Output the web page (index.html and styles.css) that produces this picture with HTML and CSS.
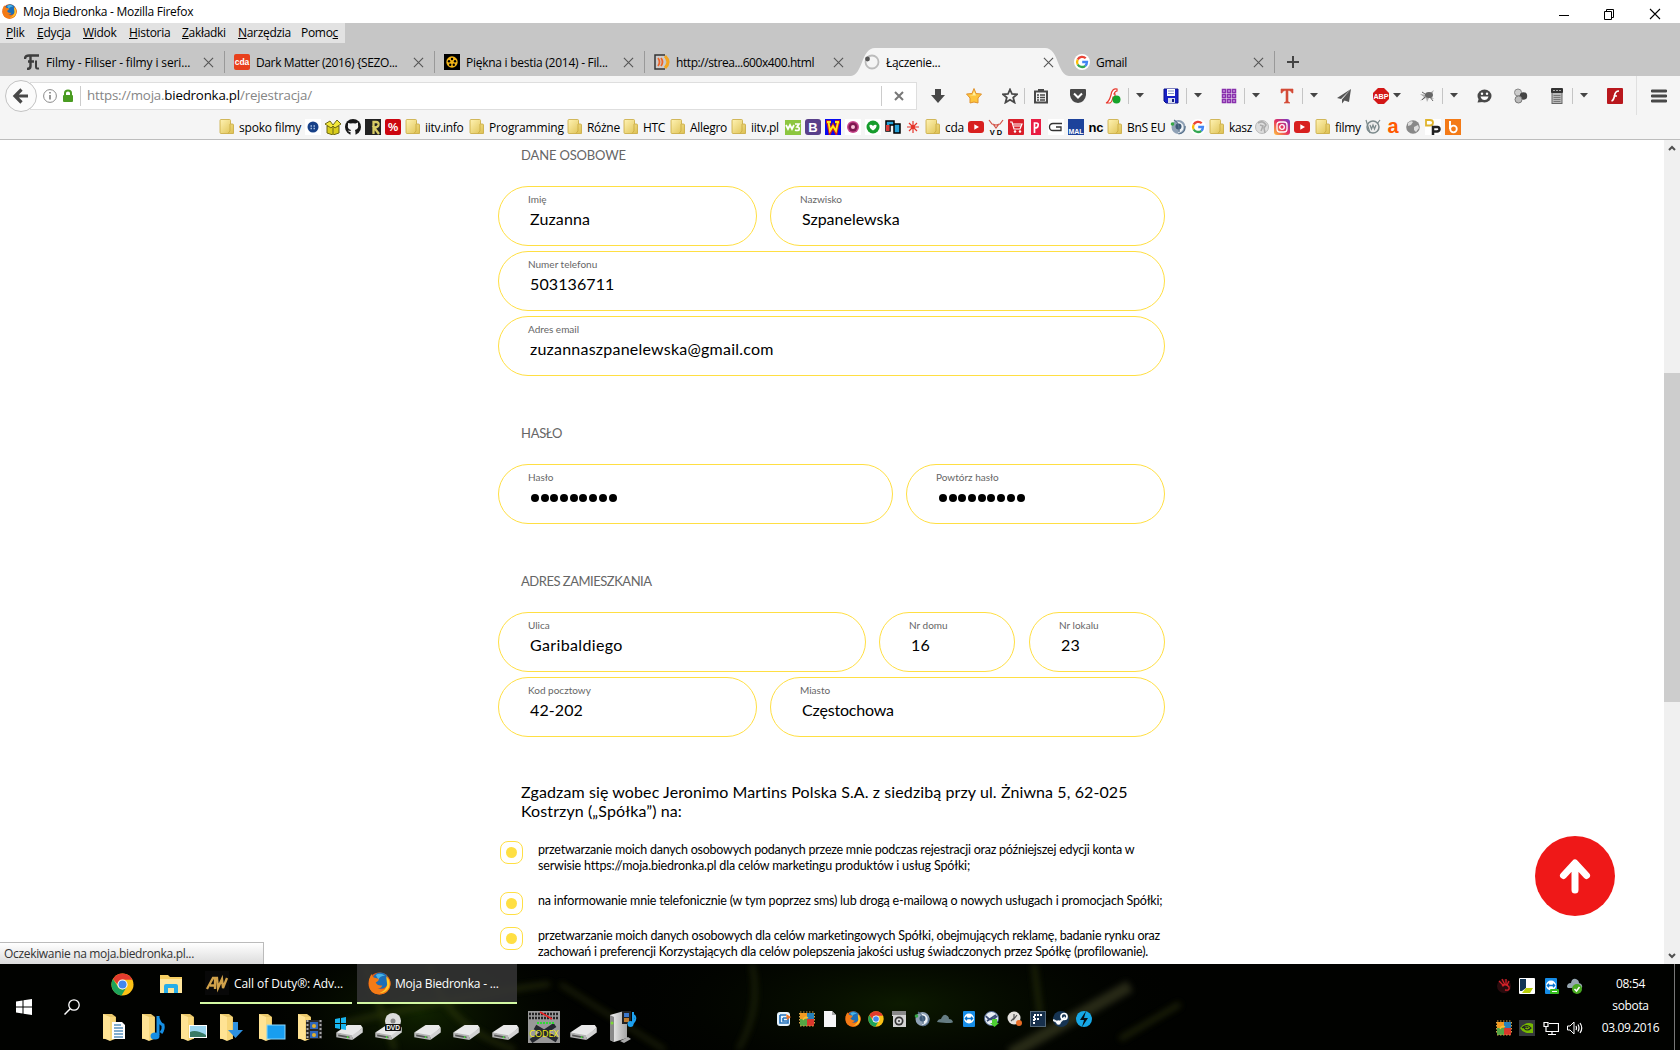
FILE: index.html
```html
<!DOCTYPE html>
<html lang="pl">
<head>
<meta charset="utf-8">
<title>Moja Biedronka</title>
<link rel="stylesheet" href="styles.css">
</head>
<body>
<svg class="defs" aria-hidden="true">
  <defs>
    <linearGradient id="gFolder" x1="0" y1="0" x2="1" y2="1"><stop offset="0" stop-color="#fff3b4"/><stop offset="1" stop-color="#ddc050"/></linearGradient>
    <linearGradient id="gInsta" x1="0" y1="1" x2="1" y2="0"><stop offset="0" stop-color="#ffc43d"/><stop offset=".5" stop-color="#e6315f"/><stop offset="1" stop-color="#6a3bd0"/></linearGradient>
    <linearGradient id="gGrey" x1="0" y1="0" x2="1" y2="0"><stop offset="0" stop-color="#f4f4f4"/><stop offset="1" stop-color="#a5a5a5"/></linearGradient>
    <symbol id="folder" viewBox="0 0 16 16"><path d="M1 1.5Q1 .5 2 .5H10.500Q11.500 .5 11.500 1.500V5H13.500Q14.500 5 14.500 6V14.500H2Q1 14.500 1 13.500Z" fill="url(#gFolder)" stroke="#c8a83c" stroke-width=".8"/><path d="M11 5V12L9 14.500" fill="none" stroke="#c8a83c" stroke-width=".8"/></symbol>
    <symbol id="close" viewBox="0 0 12 12"><path d="M1 1L11 11M11 1L1 11" stroke="#555" stroke-width="1.200" fill="none"/></symbol>
    <symbol id="caret" viewBox="0 0 8 5"><path d="M0 0H8L4 4.500Z" fill="#444"/></symbol>
    <symbol id="google" viewBox="0 0 16 16"><circle cx="8" cy="8" r="8" fill="#fff"/><g fill="none" stroke-width="2.300"><path d="M11.700 4.300A5 5 0 0 0 3.700 5.600" stroke="#ea4335"/><path d="M3.700 5.600A5 5 0 0 0 3.700 10.500" stroke="#fbbc05"/><path d="M3.700 10.500A5 5 0 0 0 11.300 11.800" stroke="#34a853"/><path d="M11.300 11.800A5 5 0 0 0 13 8H8.200" stroke="#4285f4"/></g></symbol>
    <symbol id="chrome" viewBox="0 0 24 24"><circle cx="12" cy="12" r="11.500" fill="#fbc116"/><path d="M2 6.300A11.500 11.500 0 0 1 22.400 7H12A5 5 0 0 0 7 12Z" fill="#e33b2e"/><path d="M2 6.300A11.500 11.500 0 0 0 11 23.500L16 15A5 5 0 0 1 7.500 14.500Z" fill="#1da25a"/><circle cx="12" cy="12" r="5.300" fill="#fff"/><circle cx="12" cy="12" r="4.200" fill="#4387f0"/></symbol>
    <symbol id="firefox" viewBox="0 0 24 24"><circle cx="12" cy="12" r="11.500" fill="#e55b13"/><circle cx="13" cy="9" r="8.500" fill="#1c6eb8"/><path d="M8 3Q13 0 18 4Q12 4 11 8Z" fill="#47b5e8"/><path d="M1 8Q2 4 4 2Q4 5 7 6L11 7Q12 9 8 11Q10 15 15 14Q14 17 10 17Q16 20 20 15Q22 11 19 4Q24 8 23.500 13Q22 23 12 23.500Q2 23 1 14Z" fill="#f47b16"/><path d="M19 5Q24 9 22 16Q19 22 12 22Q19 19 20 13Z" fill="#ffc92d"/></symbol>
    <symbol id="youtube" viewBox="0 0 16 16"><rect y="2" width="16" height="12" rx="3" fill="#d8201f"/><path d="M6.300 5.300L11 8L6.300 10.700Z" fill="#fff"/></symbol>
    <symbol id="teamspeak" viewBox="0 0 16 16"><circle cx="8.500" cy="8" r="7" fill="#8fa1b5"/><path d="M6 2.500Q14 3 13.500 9Q13 13 8 14Q11 9 6 2.500Z" fill="#eef2f6"/><circle cx="8.500" cy="7.500" r="3" fill="#3c5876"/><path d="M4 1Q10 4 9 13M8.500 15Q15.500 14 15 7" stroke="#56708a" stroke-width="1.200" fill="none"/><circle cx="2.500" cy="5" r="1.800" fill="#35a844"/></symbol>
    <symbol id="bigfolder" viewBox="0 0 28 28"><path d="M1 1H10L14 4V26L1 26Z" fill="#e9c76b"/><path d="M1 1L8 4V28L1 25Z" fill="#ffe394"/><path d="M8 4H13V26L8 28Z" fill="#f7d679"/></symbol>
    <symbol id="drive" viewBox="0 0 30 18"><path d="M1 9L13 1H27L29 4L18 14Z" fill="#e9e9e9"/><path d="M1 9L18 12V17L1 14Z" fill="#b5b5b5"/><path d="M18 12L29 4V9L18 17Z" fill="#d2d2d2"/><path d="M3 11L15 13.200V15L3 13Z" fill="#555"/><circle cx="13" cy="14" r="1" fill="#4be33d"/></symbol>
    <symbol id="puzzle" viewBox="0 0 16 16"><path d="M1 2H8V8H1Z" fill="#f39b22"/><path d="M8 2H15V8H8Z" fill="#2781ba"/><path d="M1 8H8V15H1Z" fill="#54a545"/><path d="M8 8H15V15H8Z" fill="#d9372c"/><path d="M1 1H15M1 15H15M.5 2V14M15.500 2V14" stroke="#d4a347" stroke-dasharray="1.500 1.500"/><path d="M4 9Q6 5 9 7" stroke="#f2c536" stroke-width="1.500" fill="none"/></symbol>
    <symbol id="viewer" viewBox="0 0 16 16"><rect x="2" width="12" height="16" rx="1" fill="#168de8"/><circle cx="8" cy="7.500" r="5" fill="#fff"/><path d="M4.500 7.500H11.500M6 5.800L4.300 7.500L6 9.200M10 5.800L11.700 7.500L10 9.200" stroke="#0874cf" stroke-width="1.300" fill="none"/></symbol>
  </defs>
</svg>

<header class="chrome">
  <div class="titlebar">
    <svg class="i15"><use href="#firefox"/></svg>
    <span class="window-title">Moja Biedronka - Mozilla Firefox</span>
    <svg class="window-buttons" viewBox="0 0 120 24"><path d="M8 15.500H18" stroke="#000"/><path d="M53.500 11.500H60.500V19.500H53.500ZM55.500 11V9.500H62.500V17.500H61" fill="none" stroke="#000"/><path d="M99 9L109 19M109 9L99 19" stroke="#000" stroke-width="1.100"/></svg>
  </div>
  <nav class="menubar">
    <span class="m1"><u>P</u>lik</span><span class="m2"><u>E</u>dycja</span><span class="m3"><u>W</u>idok</span><span class="m4"><u>H</u>istoria</span><span class="m5"><u>Z</u>akładki</span><span class="m6"><u>N</u>arzędzia</span><span class="m7">Pomo<u>c</u></span>
  </nav>
  <div class="tabs">
    <div class="tab"><svg class="i16" viewBox="0 0 16 16"><path d="M1 5Q1 1.500 5 1.500H15M6.500 2V12Q6.500 15 3 15M4 7.500H10" fill="none" stroke="#3d3d3d" stroke-width="2.400"/><path d="M12 6.500V13Q12 15 15 14.500" fill="none" stroke="#3d3d3d" stroke-width="2"/></svg><span class="t1">Filmy - Filiser - filmy i seri...</span><svg class="x"><use href="#close"/></svg></div>
    <div class="tab"><svg class="i16" viewBox="0 0 16 16"><rect width="16" height="16" rx="2" fill="#e8401c"/><text x="8" y="11" font-size="8.500" class="b mid" fill="#fff">cda</text></svg><span class="t2">Dark Matter (2016) {SEZO...</span><svg class="x"><use href="#close"/></svg></div>
    <div class="tab"><svg class="i16" viewBox="0 0 16 16"><rect width="16" height="16"/><circle cx="8" cy="8" r="5.700" fill="#f3b518"/><g fill="#000"><circle cx="8" cy="5" r="1.200"/><circle cx="5" cy="7.300" r="1.200"/><circle cx="11" cy="7.300" r="1.200"/><circle cx="6.200" cy="10.800" r="1.200"/><circle cx="9.800" cy="10.800" r="1.200"/></g></svg><span class="t3">Piękna i bestia (2014) - Fil...</span><svg class="x"><use href="#close"/></svg></div>
    <div class="tab last"><svg class="i16" viewBox="0 0 16 16"><path d="M11 1H1V15H11" fill="#ccc" stroke="#333" stroke-width="1.500"/><path d="M4 4Q7 8 4 12M7 4Q10 8 7 12" stroke="#ee6528" stroke-width="1.800" fill="none"/><path d="M11 2Q17 8 11 14" stroke="#f3a51e" stroke-width="3" fill="none"/></svg><span class="t4">http://strea...600x400.html</span><svg class="x"><use href="#close"/></svg></div>
    <div class="tab active"><svg class="tabshape" viewBox="0 0 218 29" preserveAspectRatio="none"><path d="M0 29C12 28 10 1 24 1H194C208 1 206 28 218 29Z" fill="#f5f5f5"/></svg><svg class="i16" viewBox="0 0 16 16"><circle cx="8" cy="8" r="6.500" fill="none" stroke="#bcbcbc" stroke-width="1.800"/><circle cx="3.500" cy="5" r="2.400" fill="#555"/></svg><span class="t5">Łączenie...</span><svg class="x"><use href="#close"/></svg></div>
    <div class="tab"><svg class="i16"><use href="#google"/></svg><span class="t6">Gmail</span><svg class="x"><use href="#close"/></svg></div>
    <svg class="plus" viewBox="0 0 12 12"><path d="M6 0V12M0 6H12" stroke="#444" stroke-width="2"/></svg>
  </div>
  <div class="toolbar">
    <div class="address">
      <svg class="back" viewBox="0 0 34 34"><circle cx="17" cy="17" r="15.500" fill="#fbfbfb" stroke="#c3c3c3"/><path d="M24 17H12M17.500 10.500L11 17L17.500 23.500" fill="none" stroke="#484848" stroke-width="3.200"/></svg>
      <svg class="info" viewBox="0 0 14 14"><circle cx="7" cy="7" r="6.400" fill="none" stroke="#8b8b8b"/><path d="M7 6V10.500M7 3V4.500" stroke="#777" stroke-width="1.500"/></svg>
      <svg class="lock" viewBox="0 0 12 14"><path d="M3 7V4Q3 1.500 6 1.500Q9 1.500 9 4V7" fill="none" stroke="#4a9c22" stroke-width="2"/><rect x="1" y="6" width="10" height="7" rx="1" fill="#4a9c22"/></svg>
      <span class="url">https://moja.<b>biedronka.pl</b>/rejestracja/</span>
      <svg class="stop" viewBox="0 0 10 10"><path d="M1 1L9 9M9 1L1 9" stroke="#777" stroke-width="2"/></svg>
    </div>
    <span class="tb"><svg viewBox="0 0 16 16"><path d="M5 1H11V7H15L8 15L1 7H5Z" fill="#484848"/></svg></span>
    <span class="tb"><svg viewBox="0 0 16 16"><path d="M8 .5L10 5.500L15.500 6L12 10V15L8 14L4 15V10L.5 6L6 5.500Z" fill="#fdc53d" stroke="#e0922e"/><path d="M8 3L6.500 7L3 7.500H10Z" fill="#fff0a0"/></svg></span>
    <span class="tb"><svg viewBox="0 0 16 16"><path d="M8 1.500L10 6L15 6.300L11.200 9.500L12.500 14.500L8 11.800L3.500 14.500L4.800 9.500L1 6.300L6 6Z" fill="none" stroke="#484848" stroke-width="1.800"/></svg></span>
    <i class="sep pull"></i>
    <span class="tb w32"><svg viewBox="0 0 16 16"><path d="M2 3.500H14V14.500H2Z" fill="none" stroke="#484848" stroke-width="2"/><path d="M5 4V1H11V4Z" fill="#484848"/><path d="M4 7H6M7 7H12M4 9.500H6M7 9.500H12M4 12H6M7 12H12" stroke="#484848" stroke-width="1.300"/></svg></span>
    <span class="tb w42"><svg viewBox="0 0 16 16"><path d="M0 2Q0 1 1 1H15Q16 1 16 2V7Q15 14 8 15Q1 14 0 7Z" fill="#484848"/><path d="M4 5.500L8 9.500L12 5.500" fill="none" stroke="#fff" stroke-width="2"/></svg></span>
    <span class="split"><svg viewBox="0 0 16 16"><path d="M12 1Q7 0 6 7Q4 14 1 15H5Q7 14 8 9H10V6H9Q10 3 12 3Z" fill="#fff" stroke="#e8392e" stroke-width="1.200"/><circle cx="11.500" cy="11.500" r="4" fill="#16a32a"/></svg><i class="sep"></i><svg class="caret"><use href="#caret"/></svg></span>
    <span class="split"><svg viewBox="0 0 16 16"><path d="M1 1H15V15H3L1 13Z" fill="#1720c5" stroke="#090e89"/><path d="M4 1H12V8H4Z" fill="#fff"/><path d="M5 3H11M5 5.500H11" stroke="#8597c4"/><path d="M5 10H12V15H5Z" fill="#d7dcef"/><path d="M9 11H11V14H9Z" fill="#111a7d"/></svg><i class="sep"></i><svg class="caret"><use href="#caret"/></svg></span>
    <span class="split"><svg viewBox="0 0 16 16"><g fill="#d9aeea" stroke="#8931ad" stroke-width="1.500"><path d="M1.500 1.500H4.500V4.500H1.500ZM6.500 1.500H9.500V4.500H6.500ZM11.500 1.500H14.500V4.500H11.500ZM1.500 6.500H4.500V9.500H1.500ZM6.500 6.500H9.500V9.500H6.500ZM11.500 6.500H14.500V9.500H11.500ZM1.500 11.500H4.500V14.500H1.500ZM6.500 11.500H9.500V14.500H6.500ZM11.500 11.500H14.500V14.500H11.500Z"/></g></svg><i class="sep"></i><svg class="caret"><use href="#caret"/></svg></span>
    <span class="split"><svg viewBox="0 0 16 16"><path d="M2 1H14V5H13Q12.500 2.500 10 2.500H9V13.500L11 15H5L7 13.500V2.500H6Q3.500 2.500 3 5H2Z" fill="#d34a37" stroke="#d34a37" stroke-width=".6"/></svg><i class="sep"></i><svg class="caret"><use href="#caret"/></svg></span>
    <span class="tb w28"><svg viewBox="0 0 16 16"><path d="M15 1L1 10L5 11ZM15 1L6 11.500V15.500L8.500 12.500L13 14Z" fill="#555"/></svg></span>
    <span class="abp"><svg viewBox="0 0 16 16"><path d="M5 0H11L16 5V11L11 16H5L0 11V5Z" fill="#d31717"/><text x="8" y="10.800" font-size="7.200" class="b mid" fill="#fff">ABP</text></svg><svg class="caret"><use href="#caret"/></svg></span>
    <span class="split"><svg viewBox="0 0 16 16"><path d="M1 6L8 7L15 2L12 8L15 11L10 10L8 14L7 10L1 13L5 9Z" fill="#aaa"/><ellipse cx="10" cy="7" rx="4" ry="3" fill="#666"/><path d="M3 4L9 8M11 9L14 13M6 9L3 12" stroke="#666"/></svg><i class="sep"></i><svg class="caret"><use href="#caret"/></svg></span>
    <span class="tb w28"><svg viewBox="0 0 16 16"><ellipse cx="8.500" cy="8" rx="7" ry="6.500" fill="#484848"/><path d="M1.500 14.500L3 10L7 14Z" fill="#484848"/><path d="M4.500 8.500H12.500Q11.500 12 8.500 12Q5.500 12 4.500 8.500Z" fill="#fff"/><circle cx="6" cy="5.700" r="1.200" fill="#fff"/><circle cx="11" cy="5.700" r="1.200" fill="#fff"/></svg></span>
    <span class="tb w44"><svg viewBox="0 0 16 16"><circle cx="6" cy="4.500" r="3.500" fill="#ccc" stroke="#888"/><circle cx="11.500" cy="8" r="3.700" fill="#444"/><circle cx="6.500" cy="11.500" r="3.500" fill="#bbb" stroke="#777"/></svg></span>
    <span class="split"><svg viewBox="0 0 16 16"><rect x="3" y="4" width="10" height="11.500" fill="#b9b9b9" stroke="#666"/><rect x="2" y="0" width="12" height="5" rx="1" fill="#333"/><path d="M4.500 7.500H11.500M4.500 9.500H11.500M4.500 11.500H11.500M4.500 13.500H11.500" stroke="#777"/><path d="M4 2.500H12" stroke="#aaa" stroke-dasharray="2 1"/></svg><i class="sep"></i><svg class="caret"><use href="#caret"/></svg></span>
    <span class="tb w30"><svg viewBox="0 0 16 16"><rect width="16" height="16" rx="1" fill="#b9171d"/><path d="M12 3Q8 3 7.500 8Q6.500 12.500 4.500 13M6.500 8H10" fill="none" stroke="#fff" stroke-width="1.700"/></svg></span>
    <span class="hamb"><svg viewBox="0 0 16 16"><path d="M1 3H15M1 8H15M1 13H15" stroke="#484848" stroke-width="2.800" stroke-linecap="round"/></svg></span>
  </div>
  <div class="bookmarks">
    <span class="f bk1"><svg><use href="#folder"/></svg>spoko filmy</span>
    <span class="c"><svg viewBox="0 0 16 16"><rect width="16" height="16" fill="#fff"/><circle cx="8" cy="8" r="5.500" fill="#174087"/><path d="M5.500 7H10.500M5.500 9.500H10.500" stroke="#a3bce0" stroke-width="1.300" stroke-dasharray="1.500 1.500"/></svg></span>
    <span class="c"><svg viewBox="0 0 16 16"><path d="M2 7H14V14L8 16L2 14Z" fill="#d9cd1b" stroke="#6d6716"/><path d="M0 5L5 2L8 6L12 1L16 5L10 9L8 7L6 9Z" fill="#f2e73b" stroke="#6d6716"/><path d="M8 8V15" stroke="#6d6716"/></svg></span>
    <span class="c"><svg viewBox="0 0 16 16"><circle cx="8" cy="8" r="8" fill="#181818"/><path d="M3 4L5.500 4.500Q8 3.800 10.500 4.500L13 3.500V6Q14 10 10 11Q10.600 12 10.500 16H5.500V13Q3.500 13 3 11.500L5.500 12L6 11Q2 10 3 6Z" fill="#f5f5f5"/></svg></span>
    <span class="c"><svg viewBox="0 0 16 16"><rect width="16" height="16" fill="#222"/><path d="M8.500 15V3H11Q14 3 13.500 6Q13 8.500 9 8.500L14 15" fill="none" stroke="#d9cc65" stroke-width="2.300"/></svg></span>
    <span class="c"><svg viewBox="0 0 16 16"><rect width="16" height="16" rx="2" fill="#cc0610"/><text x="8" y="12" font-size="11.500" class="b mid" fill="#fff">%</text></svg></span>
    <span class="f bk2"><svg><use href="#folder"/></svg>iitv.info</span>
    <span class="f bk3"><svg><use href="#folder"/></svg>Programming</span>
    <span class="f bk4"><svg><use href="#folder"/></svg>Różne</span>
    <span class="f bk5"><svg><use href="#folder"/></svg>HTC</span>
    <span class="f bk6"><svg><use href="#folder"/></svg>Allegro</span>
    <span class="f bk7"><svg><use href="#folder"/></svg>iitv.pl</span>
    <span class="c"><svg viewBox="0 0 16 16"><rect y="1" width="16" height="15" fill="#8cc63f"/><path d="M1 6L3 10L5 6L7 10L9 6M10 5H14L12 8Q15 8 14 11Q12 12 10 11" fill="none" stroke="#fff" stroke-width="1.700"/></svg></span>
    <span class="c"><svg viewBox="0 0 16 16"><rect width="16" height="16" rx="3" fill="#59408a"/><text x="8" y="12.500" font-size="13" class="b mid" fill="#fff">B</text></svg></span>
    <span class="c"><svg viewBox="0 0 16 16"><rect width="16" height="16" fill="#0809f0"/><path d="M1 3H6M10 3H15M3 3L5 13L8 7L11 13L13 3" fill="none" stroke="#d42019" stroke-width="3.500"/><path d="M2 3H6M10 3H14M3.500 3L5 12L8 7L11 12L13 3" fill="none" stroke="#ffec19" stroke-width="1.800"/></svg></span>
    <span class="c"><svg viewBox="0 0 16 16"><rect width="16" height="16" fill="#fff"/><circle cx="8" cy="8" r="6" fill="#c9468c"/><circle cx="8" cy="8" r="4.500" fill="#7e1950"/><circle cx="8" cy="8" r="2" fill="#fac5d9"/></svg></span>
    <span class="c"><svg viewBox="0 0 16 16"><rect width="16" height="16" fill="#fff"/><circle cx="8" cy="8" r="6.500" fill="#169c2c"/><path d="M4.500 6Q6.500 5 8 7Q9.500 5 11.500 6Q12 9 8 11.500Q4 9 4.500 6Z" fill="#fff"/></svg></span>
    <span class="c"><svg viewBox="0 0 16 16"><path d="M1 12V2H9V5H15V14H9V6H5V12Z" fill="#28a3d9" stroke="#000" stroke-width="1.500"/><path d="M1 6H4.500V12H1Z" fill="#da3937"/></svg></span>
    <span class="c"><svg viewBox="0 0 16 16"><path d="M8 2V14M2 8H14M4 4L12 12M12 4L4 12" stroke="#e6342a" stroke-width="1.200"/><circle cx="8" cy="8" r="2" fill="#e6342a"/></svg></span>
    <span class="f bk8"><svg><use href="#folder"/></svg>cda</span>
    <span class="c"><svg><use href="#youtube"/></svg></span>
    <span class="c"><svg viewBox="0 0 16 16"><path d="M1 1L4 5L8 6L12 5L15 1M5 5L8 9L11 5" fill="none" stroke="#d35347" stroke-width="1.200"/><text x="8" y="15.500" font-size="7.500" class="b mid">V D</text></svg></span>
    <span class="c"><svg viewBox="0 0 16 16"><rect width="16" height="16" rx="1" fill="#d91f2a"/><path d="M2 3H4L6 10H12L14 5H5M6 7H13" fill="none" stroke="#fff" stroke-width="1.200"/><circle cx="7" cy="12.500" r="1.200" fill="#fff"/><circle cx="12" cy="12.500" r="1.200" fill="#fff"/></svg></span>
    <span class="c"><svg viewBox="0 0 16 16"><rect x="3" width="10" height="16" fill="#e91d43"/><path d="M6.500 14V4H8Q11 4 10 7Q9.500 9 7 9" fill="none" stroke="#fff" stroke-width="1.700"/></svg></span>
    <span class="c"><svg viewBox="0 0 16 16"><rect width="16" height="16" fill="#fff"/><path d="M14 4.500H5Q1.500 4.500 1.500 8Q1.500 11.500 5 11.500H13V8H8" fill="none" stroke="#333" stroke-width="1.300"/></svg></span>
    <span class="c"><svg viewBox="0 0 16 16"><rect width="16" height="16" fill="#1c429b"/><text x="8" y="15" font-size="7" class="b mid" fill="#fff">MAL</text></svg></span>
    <span class="c"><svg viewBox="0 0 16 16"><text x="8" y="12.500" font-size="13" class="b mid">nc</text></svg></span>
    <span class="f bk9"><svg><use href="#folder"/></svg>BnS EU</span>
    <span class="c"><svg><use href="#teamspeak"/></svg></span>
    <span class="c"><svg><use href="#google"/></svg></span>
    <span class="f bk10"><svg><use href="#folder"/></svg>kasz</span>
    <span class="c"><svg viewBox="0 0 16 16"><circle cx="8" cy="8" r="6.500" fill="#ddd" stroke="#bbb"/><path d="M4 4Q9 1 12 6L10 9L11 14M6 6L9 7L7 12" fill="none" stroke="#aaa" stroke-width="1.500"/></svg></span>
    <span class="c"><svg viewBox="0 0 16 16"><rect width="16" height="16" rx="3" fill="url(#gInsta)"/><rect x="3" y="3" width="10" height="10" rx="3" fill="none" stroke="#fff" stroke-width="1.300"/><circle cx="8" cy="8" r="2.300" fill="none" stroke="#fff" stroke-width="1.300"/></svg></span>
    <span class="c"><svg><use href="#youtube"/></svg></span>
    <span class="f bk11"><svg><use href="#folder"/></svg>filmy</span>
    <span class="c"><svg viewBox="0 0 16 16"><circle cx="8" cy="8" r="6" fill="#eee" stroke="#7b898b" stroke-width="1.500"/><path d="M1 1L5 14M15 1L12 5M5 6L6.500 10L8 6L9.500 10L11 6" fill="none" stroke="#7b898b" stroke-width="1.200"/></svg></span>
    <span class="c"><svg viewBox="0 0 16 16"><text x="8" y="14" font-size="20" class="b mid" fill="#ff5a00">a</text></svg></span>
    <span class="c"><svg viewBox="0 0 16 16"><circle cx="8" cy="8" r="6.800" fill="#888"/><path d="M3 4Q6 1 8 3L6 6L3 7ZM9 8L13 6L14 9L11 13L9 11Z" fill="#ddd"/></svg></span>
    <span class="c"><svg viewBox="0 0 16 16"><rect width="16" height="16" fill="#fff"/><path d="M1 1H5Q8 1 8 3.500Q8 6.500 5 6.500H1Z" fill="#fff" stroke="#dfb42d" stroke-width="1.800"/><path d="M8 16V8H12.500Q14.500 8 14.500 10.500Q14.500 13 9 12.500" fill="none" stroke="#222" stroke-width="2.500"/></svg></span>
    <span class="c"><svg viewBox="0 0 16 16"><rect width="16" height="16" fill="#f47a16"/><path d="M5 2V10" stroke="#fff" stroke-width="2"/><circle cx="8.500" cy="10" r="3.300" fill="none" stroke="#fff" stroke-width="1.800"/></svg></span>
  </div>
</header>

<main class="page">
  <form class="form">
    <h2 class="h-a">DANE OSOBOWE</h2>
    <div class="row r-name"><label class="field"><small>Imię</small><span class="v v1">Zuzanna</span></label><label class="field"><small>Nazwisko</small><span class="v v2">Szpanelewska</span></label></div>
    <div class="row"><label class="field"><small>Numer telefonu</small><span class="v v3">503136711</span></label></div>
    <div class="row"><label class="field"><small>Adres email</small><span class="v v4">zuzannaszpanelewska@gmail.com</span></label></div>
    <h2>HASŁO</h2>
    <div class="row r-pass"><label class="field"><small>Hasło</small><span class="dots"><i></i><i></i><i></i><i></i><i></i><i></i><i></i><i></i><i></i></span></label><label class="field"><small>Powtórz hasło</small><span class="dots"><i></i><i></i><i></i><i></i><i></i><i></i><i></i><i></i><i></i></span></label></div>
    <h2 class="h-c">ADRES ZAMIESZKANIA</h2>
    <div class="row r-street"><label class="field"><small>Ulica</small><span class="v v5">Garibaldiego</span></label><label class="field"><small>Nr domu</small><span class="v v3">16</span></label><label class="field"><small>Nr lokalu</small><span class="v v3">23</span></label></div>
    <div class="row r-name"><label class="field"><small>Kod pocztowy</small><span class="v v3">42-202</span></label><label class="field"><small>Miasto</small><span class="v v6">Częstochowa</span></label></div>
    <p class="intro"><span class="in1">Zgadzam się wobec Jeronimo Martins Polska S.A. z siedzibą przy ul. Żniwna 5, 62-025</span><br><span class="in2">Kostrzyn („Spółka”) na:</span></p>
    <div class="consent c1"><i class="check"></i><p><span class="l1">przetwarzanie moich danych osobowych podanych przeze mnie podczas rejestracji oraz późniejszej edycji konta w</span><br><span class="l2">serwisie https://moja.biedronka.pl dla celów marketingu produktów i usług Spółki;</span></p></div>
    <div class="consent c2"><i class="check"></i><p><span class="l3">na informowanie mnie telefonicznie (w tym poprzez sms) lub drogą e-mailową o nowych usługach i promocjach Spółki;</span></p></div>
    <div class="consent c3"><i class="check"></i><p><span class="l4">przetwarzanie moich danych osobowych dla celów marketingowych Spółki, obejmujących reklamę, badanie rynku oraz</span><br><span class="l5">zachowań i preferencji Korzystających dla celów polepszenia jakości usług świadczonych przez Spółkę (profilowanie).</span></p></div>
  </form>
  <div class="scrollbar"><svg viewBox="0 0 16 16"><path d="M5 10L8 7L11 10" fill="none" stroke="#505050" stroke-width="2"/></svg><i class="thumb"></i><svg viewBox="0 0 16 16"><path d="M5 6L8 9L11 6" fill="none" stroke="#505050" stroke-width="2"/></svg></div>
  <svg class="totop" viewBox="0 0 80 80"><circle cx="40" cy="40" r="40" fill="#ef1818"/><path d="M40 54V28M28.500 39.500L40 27L51.500 39.500" fill="none" stroke="#fff" stroke-width="7" stroke-linecap="round" stroke-linejoin="round"/></svg>
  <div class="status">Oczekiwanie na moja.biedronka.pl...</div>
</main>

<footer class="taskbar">
  <svg class="wall" viewBox="0 0 1680 86" preserveAspectRatio="none">
    <defs><filter id="soft"><feGaussianBlur stdDeviation="3"/></filter><radialGradient id="gGreen"><stop offset="0" stop-color="#142a00"/><stop offset="1" stop-color="#020400" stop-opacity="0"/></radialGradient></defs>
    <ellipse cx="900" cy="40" rx="280" ry="90" fill="url(#gGreen)" opacity=".6"/><ellipse cx="420" cy="50" rx="170" ry="90" fill="url(#gGreen)" opacity=".8"/>
    <g fill="none" stroke="#4c5516" filter="url(#soft)" opacity=".4"><path d="M752 0Q762 45 738 86M560 20L665 86" stroke-width="4"/><path d="M1034 0L1040 50M1120 75L1180 40" stroke-width="5"/><path d="M1010 90L1130 22" stroke="#62633a" stroke-width="12"/><path d="M365 0L395 86M430 0Q440 60 515 86M340 60Q470 30 550 20" stroke-width="5"/></g>
  </svg>
  <svg class="start" viewBox="0 0 16 16"><path d="M0 2.500L6.500 1.500V7.500H0ZM7.500 1.300L16 0V7.500H7.500ZM0 8.500H6.500V14.500L0 13.500ZM7.500 8.500H16V16L7.500 14.700Z" fill="#fff"/></svg>
  <svg class="search" viewBox="0 0 16 16"><circle cx="10" cy="6" r="5.200" fill="none" stroke="#fff" stroke-width="1.300"/><path d="M6.200 9.800L.5 15.500" stroke="#fff" stroke-width="1.500"/></svg>
  <div class="tasks">
    <div class="running">
      <svg class="i22"><use href="#chrome"/></svg>
      <svg class="expl" viewBox="0 0 22 20"><path d="M0 1H8L10 3H22V19H0Z" fill="#f6ce62"/><path d="M0 5H22V19H0Z" fill="#ffe69c"/><path d="M4 19V12Q4 10 6 10H16Q18 10 18 12V19H14V14H8V19Z" fill="#26ade8"/></svg>
      <div class="task aw"><svg viewBox="0 0 24 24"><rect width="24" height="24" fill="#080808"/><path d="M2 18L8 7H10V18M5 14.500H9M10 7H12L13 17L17 8L18 17L22 7" fill="none" stroke="#d0a14a" stroke-width="2.300"/></svg><span>Call of Duty®: Adv...</span></div>
      <div class="task ff"><svg class="i22"><use href="#firefox"/></svg><span>Moja Biedronka - ...</span></div>
    </div>
    <div class="quick">
      <svg viewBox="0 0 32 32"><use href="#bigfolder" x="3" y="2" width="28" height="28"/><path d="M13 11H23L26 14V28H13Z" fill="#fff"/><path d="M15 14H22M15 17H24M15 20H24M15 23H24M15 26H24" stroke="#5b93bd" stroke-width="1.300"/></svg>
      <svg viewBox="0 0 32 32"><use href="#bigfolder" x="3" y="2" width="28" height="28"/><path d="M20 5V24M20 7Q22 13 25 14Q26 18 23 22" fill="none" stroke="#168fe4" stroke-width="3"/><ellipse cx="17" cy="25" rx="4.500" ry="3.500" fill="#168fe4"/></svg>
      <svg viewBox="0 0 32 32"><use href="#bigfolder" x="3" y="2" width="28" height="28"/><rect x="12" y="14" width="18" height="13" fill="#fff"/><rect x="13" y="15" width="16" height="11" fill="#9bd6ef"/><path d="M13 21Q19 18 29 24V26H13Z" fill="#397a65"/></svg>
      <svg viewBox="0 0 32 32"><use href="#bigfolder" x="3" y="2" width="28" height="28"/><path d="M17 11H22V19H27L19.500 27L12 19H17Z" fill="#2e91df"/></svg>
      <svg viewBox="0 0 32 32"><use href="#bigfolder" x="3" y="2" width="28" height="28"/><rect x="12" y="14" width="18" height="14" fill="#189ef0" stroke="#8bd7fc"/></svg>
      <svg viewBox="0 0 32 32"><use href="#bigfolder" x="3" y="2" width="28" height="28"/><rect x="12" y="9" width="16" height="19" fill="#272727"/><path d="M13.500 9V28M26.500 9V28" stroke="#aaa" stroke-width="2" stroke-dasharray="2 2"/><rect x="16" y="11" width="8" height="7" fill="#3066ba"/><rect x="16" y="20" width="8" height="7" fill="#3066ba"/><circle cx="20" cy="15" r="2" fill="#e2b02d"/><circle cx="20" cy="24" r="2" fill="#e2b02d"/></svg>
      <svg viewBox="0 0 32 32"><use href="#drive" x="2" y="13" width="29" height="17"/><path d="M2 8L7 7V12H2ZM8 7L13 6V12H8ZM2 13H7V18L2 17ZM8 13H13V19L8 18Z" fill="#18b6f0"/></svg>
      <svg viewBox="0 0 32 32"><use href="#drive" x="2" y="13" width="29" height="17"/><circle cx="21" cy="10" r="8" fill="#ddd"/><circle cx="21" cy="10" r="2.500" fill="#888"/><rect x="13" y="13" width="16" height="7" rx="1" fill="#111"/><text x="21" y="19" font-size="6.500" class="b mid" fill="#fff">DVD</text></svg>
      <svg viewBox="0 0 32 32"><use href="#drive" x="2" y="13" width="29" height="17"/></svg>
      <svg viewBox="0 0 32 32"><use href="#drive" x="2" y="13" width="29" height="17"/></svg>
      <svg viewBox="0 0 32 32"><use href="#drive" x="2" y="13" width="29" height="17"/></svg>
      <svg class="codex" viewBox="0 0 32 32"><rect width="32" height="32" fill="#999"/><path d="M3 30L27 14M7 16L29 29" stroke="#25282f" stroke-width="5"/><path d="M1 3H31M1 7H30" stroke="#222" stroke-width="2.500" stroke-dasharray="2 1"/><path d="M12 1L24 8" stroke="#e22" stroke-width="1.500"/><path d="M9 12H27" stroke="#2fdc35" stroke-width="2" stroke-dasharray="2 1"/><text x="16" y="26" font-size="9" class="mid" fill="#f4ed14">CODEX</text></svg>
      <svg viewBox="0 0 32 32"><use href="#drive" x="2" y="13" width="29" height="17"/></svg>
      <svg class="media" viewBox="0 0 32 36"><path d="M4 6L18 2L21 5V29L8 33L4 31Z" fill="url(#gGrey)"/><path d="M4 6L8 8V33L4 31Z" fill="#888"/><path d="M14 32L22 28L25 30L18 34Z" fill="#aaa"/><circle cx="6" cy="14" r="1.500" fill="#7bd834"/><rect x="16" y="2" width="9" height="13" fill="#222"/><rect x="18" y="4" width="5" height="4" fill="#3c78cc"/><rect x="18" y="9" width="5" height="4" fill="#bd7b30"/><path d="M27 3V14Q31 10 28 6" fill="none" stroke="#1ca0ee" stroke-width="2"/><circle cx="24.500" cy="15" r="3" fill="#1ca0ee"/></svg>
    </div>
  </div>
  <div class="launch">
    <svg viewBox="0 0 16 16"><rect x="1" y="1" width="13" height="14" rx="3" fill="#e7f4fc"/><path d="M4 4H10M4 4V12H12V7M7 7H11M7 7V10H11" fill="none" stroke="#2773bb" stroke-width="1.700"/><path d="M10 3L15 6L11 9Z" fill="#ee7325"/></svg>
    <svg><use href="#puzzle"/></svg>
    <svg viewBox="0 0 16 16"><path d="M2 0H10L14 4V16H2Z" fill="#f6f6f6"/><path d="M10 0V4H14Z" fill="#aaa"/></svg>
    <svg><use href="#firefox"/></svg><svg><use href="#chrome"/></svg>
    <svg viewBox="0 0 16 16"><path d="M1 0H15V16H2V5H1Z" fill="#d3d3d3"/><path d="M1 0H15V4H1Z" fill="#888"/><circle cx="8" cy="10" r="4.500" fill="#333"/><circle cx="8" cy="10" r="2.800" fill="#ddd"/><circle cx="8" cy="10" r="1" fill="#333"/></svg>
    <svg><use href="#teamspeak"/></svg>
    <svg viewBox="0 0 16 16"><path d="M0 11Q1 8 4 8Q6 3 9 4Q12 5 12 8Q15 8 16 11Q15 13 0 11Z" fill="#657c82"/></svg>
    <svg><use href="#viewer"/></svg>
    <svg viewBox="0 0 16 16"><circle cx="7.500" cy="7.500" r="7" fill="#e8eef5" stroke="#455d88"/><path d="M2 5Q7 12 13 5M3 10L12 4" fill="none" stroke="#394c75" stroke-width="1.700"/><path d="M8 8H13V12H15L10.500 16L6 12H8Z" fill="#4dcf32"/></svg>
    <svg viewBox="0 0 16 16"><circle cx="7" cy="7" r="6.500" fill="#e4e1dd"/><path d="M7 3V8L10 4M4 10L7 7" fill="none" stroke="#555" stroke-width="1.200"/><circle cx="12" cy="12" r="3" fill="#e76b24"/></svg>
    <svg viewBox="0 0 16 16"><rect x=".5" y=".5" width="15" height="15" fill="#17304c" stroke="#53687a"/><path d="M4 13V4H12M4 8H10" fill="none" stroke="#fff" stroke-width="2" stroke-dasharray="2 1"/></svg>
    <svg viewBox="0 0 16 16"><circle cx="8" cy="8" r="8" fill="#163453"/><path d="M0 9L6 12L12 6" fill="none" stroke="#e8edf1" stroke-width="2"/><circle cx="11" cy="5.500" r="3" fill="none" stroke="#fff" stroke-width="1.700"/><circle cx="5.500" cy="11.500" r="2.300" fill="#fff"/></svg>
    <svg viewBox="0 0 16 16"><circle cx="8" cy="8" r="8" fill="#16a8e7"/><path d="M10 0L4 9H8L6 16L12 7H8Z" fill="#071017"/></svg>
  </div>
  <div class="tray">
    <svg viewBox="0 0 16 16"><circle cx="8" cy="8" r="7" fill="#280b0d"/><path d="M3 3L8 8M6 1L9 7M10 1L10 6M13 3L11 7M6 8Q10 5 13 9Q14 13 9 12" fill="none" stroke="#d42128" stroke-width="1.300"/></svg>
    <svg viewBox="0 0 16 16"><rect width="16" height="16" rx="1" fill="#fff"/><path d="M1 1H7V10L3 13H1Z" fill="#103454"/><path d="M7 10H14L11 15H3Z" fill="#b9ce08"/></svg>
    <svg viewBox="0 0 16 16"><use href="#viewer"/><rect x="7" y="11" width="9" height="5" rx="1" fill="#35bb1d"/><path d="M9 13.500H14" stroke="#fff"/></svg>
    <svg viewBox="0 0 16 16"><path d="M0 9Q0 5 4 5Q5 0 9 1Q12 2 12 5Q16 6 15 10H1Z" fill="#95a5af"/><circle cx="10" cy="11" r="5" fill="#48a91f"/><path d="M7.500 11L9.500 13L12.500 9" fill="none" stroke="#fff" stroke-width="1.500"/></svg>
    <svg><use href="#puzzle"/></svg>
    <svg viewBox="0 0 16 16"><rect width="16" height="16" fill="#34383c"/><path d="M1 8Q7 1 14 4V13H8Q3 12 1 8Z" fill="#76b900"/><path d="M3 8Q8 3 12 8Q8 12 5 8Q8 6 9 8" fill="none" stroke="#222" stroke-width="1.200"/></svg>
    <svg viewBox="0 0 16 16"><path d="M6 3.500H15.500V11.500H3V8M9 12V14.500M5 14.500H13M1 2.500H5V6.500H1ZM3 7V12" fill="none" stroke="#fff" stroke-width="1.200"/></svg>
    <svg viewBox="0 0 16 16"><path d="M.5 6H3L7 2V14L3 10H.5Z" fill="none" stroke="#fff"/><path d="M9 6Q10 8 9 10M11 4.500Q13 8 11 11.500M13 3Q16.500 8 13 13" fill="none" stroke="#fff" stroke-width="1.200"/></svg>
  </div>
  <div class="clock"><span>08:54</span><span>sobota</span><span>03.09.2016</span></div>
</footer>
</body>
</html>
```

FILE: styles.css
```css
* { box-sizing: border-box; }
body { margin: 0; width: 1680px; height: 1050px; overflow: hidden; display: flex; flex-direction: column; font-family: "Open Sans", "Noto Sans", sans-serif; font-size: 12px; color: #000; background: #fff; white-space: nowrap; }
svg { display: block; flex: none; }
.defs { position: absolute; width: 0; height: 0; }
.b { font-weight: 700; font-family: "Liberation Sans", sans-serif; letter-spacing: 0; }
.mid { text-anchor: middle; }
.i15 { width: 15px; height: 15px; }
.i16 { width: 16px; height: 16px; }
.i22 { width: 23px; height: 23px; }

/* window frame */
.chrome { flex: none; height: 140px; border-bottom: 1px solid #bdbdbd; background: #f5f5f5 linear-gradient(#c6c6c6, #c6c6c6) 0 0 / 100% 76px no-repeat; }
.titlebar { height: 23px; background: #fff; display: flex; align-items: center; padding: 0 9px 0 2px; }
.window-title { margin-left: 6px; flex: 1; letter-spacing: -.28px; }
.window-buttons { width: 120px; height: 24px; }
.menubar { height: 20px; background: #e2e2e2; width: 345px; display: flex; line-height: 20px; padding-left: 6px; letter-spacing: -.3px; }
.m1 { width: 31px; } .m2 { width: 46px; } .m3 { width: 46px; } .m4 { width: 53px; } .m5 { width: 56px; } .m6 { width: 63px; } .m7 { width: 44px; }
.tabs { height: 33px; display: flex; padding: 0 0 0 15px; }
.tab { position: relative; width: 210px; height: 33px; display: flex; align-items: center; padding: 5px 11px 0 9px; letter-spacing: -.3px; }
.tab::after { content: ""; position: absolute; right: 0; top: 8px; width: 1px; height: 22px; background: #999; }
.tab.active::after, .tab.last::after { display: none; }
.tab span { margin-left: 6px; flex: 1; position: relative; }
.tab .t1 { letter-spacing: -.13px; } .tab .t2 { letter-spacing: -.38px; } .tab .t3 { letter-spacing: -.26px; } .tab .t4 { letter-spacing: -.42px; }
.tab .i16 { position: relative; }
.tab .x { width: 11px; height: 11px; position: relative; }
.tabshape { position: absolute; left: -4px; top: 4px; width: 218px; height: 29px; }
.plus { width: 12px; height: 12px; margin: 13px 0 0 12px; }

/* navigation row */
.toolbar { height: 39px; display: flex; align-items: center; }
.address { width: 887px; height: 28px; margin-left: 30px; margin-right: 3px; background: #fff; border: 1px solid #dedede; display: flex; align-items: center; }
.back { width: 34px; height: 34px; margin-left: -27px; }
.info { width: 14px; height: 14px; margin-left: 5px; }
.lock { width: 12px; height: 14px; margin: 0 6px 0 5px; }
.url { flex: 1; border-left: 1px solid #ccc; border-right: 1px solid #ccc; height: 20px; line-height: 19px; padding-left: 6px; font-size: 13.3px; color: #858585; letter-spacing: -.2px; }
.url b { font-weight: 400; color: #000; }
.stop { width: 10px; height: 10px; margin: 0 12px; }
.tb { width: 36px; display: flex; justify-content: center; }
.toolbar > span svg { width: 16px; height: 16px; }
.toolbar > span svg.caret { width: 8px; height: 5px; }
.sep { width: 1px; height: 16px; background: #c5c5c5; flex: none; }
.pull { margin-left: -4px; }
.tb.w32 { width: 32px; } .tb.w42 { width: 41px; } .tb.w28 { width: 28px; } .tb.w44 { width: 44px; } .tb.w30 { width: 30px; }
.split { width: 58px; display: flex; align-items: center; padding-left: 7px; }
.split .sep { margin: 0 7px; }
.abp { width: 54px; padding-left: 15px; display: flex; align-items: center; gap: 4px; }
.hamb { height: 39px; margin-left: 6px; padding: 12px 0 0 14px; width: 43px; border-left: 1px solid #e0e0e0; }

/* bookmarks row */
.bookmarks { display: flex; height: 24px; align-items: center; padding-left: 219px; letter-spacing: -.3px; }
.bookmarks svg { width: 16px; height: 16px; }
.c { width: 20px; display: flex; justify-content: center; flex: none; }
.f { display: flex; align-items: center; gap: 4px; flex: none; }
.bk1 { width: 84px; letter-spacing: -.2px; } .bk2 { width: 64px; margin-left: 2px; } .bk3 { width: 98px; letter-spacing: -.15px; } .bk4 { width: 56px; } .bk5 { width: 47px; } .bk6 { width: 61px; } .bk7 { width: 52px; }
.bk8 { width: 41px; margin-left: 2px; } .bk9 { width: 61px; margin-left: 1px; } .bk10 { width: 43px; margin-left: 1px; } .bk11 { width: 48px; margin-left: 3px; }

/* registration form */
.page { flex: none; height: 824px; overflow: hidden; position: relative; display: flex; justify-content: space-between; font-family: Lato, "Open Sans", sans-serif; }
.form { margin-left: 498px; width: 667px; }
h2 { margin: 0 0 0 23px; font-size: 13px; font-weight: 400; color: #666; line-height: 16px; letter-spacing: -.3px; padding: 7px 0 23px; height: 46px; }
.h-a { letter-spacing: -.15px; }
.h-c { letter-spacing: -.48px; }
.row + h2 { margin-top: 42px; }
.row { display: grid; gap: 13px; margin-bottom: 5px; }
.r-name { grid-template-columns: 259px 1fr; }
.r-pass { grid-template-columns: 395px 1fr; }
.r-street { grid-template-columns: 368px 136px 137px; }
.r-street .field:last-child { margin-left: 1px; }
.field { height: 60px; border: 1px solid #ffdf43; border-radius: 30px; padding: 6px 0 0 29px; display: flex; flex-direction: column; }
.field small { font-size: 10px; line-height: 13px; color: #666; }
.v { font-size: 16px; line-height: 20px; margin: 3px 0 0 2px; }
.v1 { letter-spacing: .15px; } .v3 { letter-spacing: .1px; } .v4 { letter-spacing: .22px; } .v5 { letter-spacing: .35px; } .v6 { letter-spacing: -.18px; }
.dots { display: flex; gap: 1.700px; margin: 10px 0 0 3px; }
.dots i { width: 8px; height: 8px; border-radius: 4px; background: #000; }
.intro { margin: 45px 0 0 23px; font-size: 16px; line-height: 19px; letter-spacing: .1px; }
.consent { display: flex; padding-left: 2px; font-size: 12.5px; line-height: 16px; }
.consent p { margin: 0 0 0 15px; padding-top: 2px; }
.l1 { letter-spacing: -.24px; } .l2 { letter-spacing: -.17px; } .l3 { letter-spacing: -.19px; } .l4 { letter-spacing: -.21px; } .l5 { letter-spacing: -.22px; }
.check { flex: none; width: 23px; height: 23px; border: 1px solid #ffdf43; border-radius: 8px; display: grid; place-items: center; margin-top: 1px; }
.check::before { content: ""; width: 11px; height: 11px; border-radius: 6px; background: #ffdf43; }
.c1 { margin-top: 20px; height: 51px; } .c2 { height: 35px; }
.scrollbar { width: 16px; background: #f0f0f0; display: flex; flex-direction: column; justify-content: space-between; }
.scrollbar svg { width: 16px; height: 16px; }
.thumb { width: 16px; height: 329px; background: #cdcdcd; margin-bottom: 30px; }
.totop { position: absolute; left: 1535px; top: 696px; width: 80px; height: 80px; }
.status { position: absolute; left: 0; bottom: 0; width: 264px; height: 22px; border: 1px solid #bbb; border-left: 0; border-bottom: 0; background: linear-gradient(#fff, #dcdcdc); font-family: "Open Sans", sans-serif; color: #333; padding-left: 4px; line-height: 21px; letter-spacing: -.32px; }

/* taskbar */
.taskbar { flex: none; position: relative; height: 86px; background: #010200; color: #fff; display: flex; align-items: center; }
.wall { position: absolute; inset: 0; width: 1680px; height: 86px; }
.taskbar > :not(.wall) { position: relative; }
.start { width: 16px; height: 16px; margin-left: 16px; }
.search { width: 16px; height: 16px; margin-left: 32px; }
.tasks { width: 562px; margin-left: 18px; height: 86px; }
.running { display: flex; height: 40px; padding-left: 13px; align-items: center; }
.expl { width: 22px; height: 20px; margin-left: 26px; }
.task { height: 40px; display: flex; align-items: center; border-bottom: 2px solid #d3f9a3; letter-spacing: -.2px; }
.aw { width: 152px; margin-left: 18px; padding-left: 5px; letter-spacing: -.08px; }
.aw svg { width: 24px; height: 24px; margin-right: 5px; }
.ff { width: 160px; margin-left: 5px; padding-left: 11px; background: #353535dd; }
.ff span { margin-left: 4px; }
.quick { display: flex; height: 46px; align-items: center; gap: 7px; padding-left: 1px; }
.quick svg { width: 32px; height: 32px; }
.quick .media { height: 36px; }
.launch { display: flex; gap: 7.070px; margin-left: 116px; padding-top: 24px; }
.launch svg { width: 16px; height: 16px; }
.tray { display: grid; grid-template-columns: repeat(4, 16px); column-gap: 7.800px; row-gap: 26px; margin-left: auto; margin-right: 4px; }
.tray svg { width: 16px; height: 16px; }
.clock { width: 88px; height: 86px; margin-right: 5px; padding-top: 9px; border-right: 1px solid #777; display: flex; flex-direction: column; align-items: center; line-height: 22px; letter-spacing: -.35px; }
```
